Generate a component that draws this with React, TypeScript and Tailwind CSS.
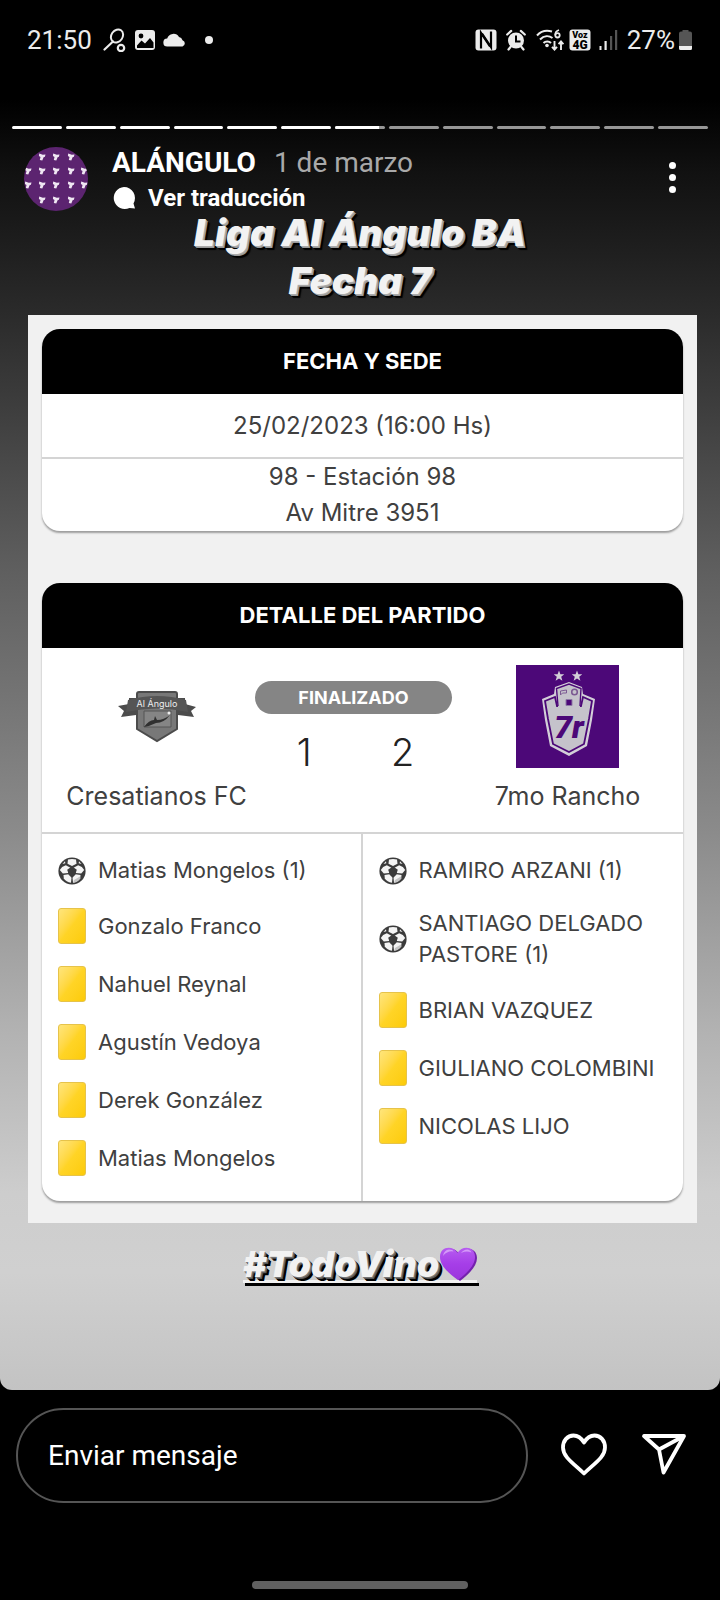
import React from "react";

type PlayerEvent = { kind: "goal" | "card"; name: string };

const homeEvents: PlayerEvent[] = [
  { kind: "goal", name: "Matias Mongelos (1)" },
  { kind: "card", name: "Gonzalo Franco" },
  { kind: "card", name: "Nahuel Reynal" },
  { kind: "card", name: "Agustín Vedoya" },
  { kind: "card", name: "Derek González" },
  { kind: "card", name: "Matias Mongelos" },
];

const awayEvents: PlayerEvent[] = [
  { kind: "goal", name: "RAMIRO ARZANI (1)" },
  { kind: "goal", name: "SANTIAGO DELGADO PASTORE (1)" },
  { kind: "card", name: "BRIAN VAZQUEZ" },
  { kind: "card", name: "GIULIANO COLOMBINI" },
  { kind: "card", name: "NICOLAS LIJO" },
];

const segments = [100, 100, 100, 100, 100, 100, 88, 0, 0, 0, 0, 0, 0];

function StatusBar() {
  return (
    <div className="flex h-20 items-center justify-between px-[27px] text-[26px] text-[#ececec]">
      <div className="flex items-center">
        <span>21:50</span>
        <svg className="ml-[11px] h-6 w-6" viewBox="0 0 24 24" fill="none" stroke="currentColor">
          <ellipse cx="14" cy="8" rx="5.6" ry="7" transform="rotate(35 14 8)" strokeWidth="2" />
          <path d="M10 13.5L1.5 21.5" strokeWidth="2.2" strokeLinecap="round" />
          <circle cx="18" cy="20" r="3.2" strokeWidth="2.2" />
        </svg>
        <svg className="ml-[7px] h-[22px] w-[22px]" viewBox="0 0 22 22">
          <rect x="1" y="1" width="20" height="20" rx="3" fill="currentColor" />
          <circle cx="7" cy="7" r="2.4" fill="#000" />
          <path d="M3 16.5l4.500-5 3.500 3 5-5.500 3.500 4.500V19H3z" fill="#000" />
        </svg>
        <svg className="ml-[7px] h-4 w-6" viewBox="0 0 24 16">
          <path d="M4.500 14.500a4 4 0 0 1-.3-8A6.500 6.500 0 0 1 16 5a4.500 4.500 0 0 1 3.500 3.200 3.300 3.300 0 0 1 0 6.300z" fill="currentColor" />
        </svg>
        <span className="ml-[18px] h-2 w-2 rounded-full bg-[#ececec]" />
      </div>
      <div className="flex items-center">
        <svg className="h-[22px] w-[22px]" viewBox="0 0 22 22">
          <rect x="0.500" y="0.500" width="21" height="21" rx="3" fill="currentColor" />
          <path d="M6 19.500V4l9 13.500" fill="none" stroke="#000" strokeWidth="2.200" />
          <path d="M16 2.500V18L7 4.500" fill="none" stroke="#000" strokeWidth="2.200" />
        </svg>
        <svg className="ml-[9px] h-[22px] w-5" viewBox="0 0 20 22">
          <circle cx="10" cy="11.500" r="8" fill="currentColor" />
          <path d="M1.200 5.500l4-3.600M18.800 5.500l-4-3.600M4.500 18L2.500 20.500M15.500 18l2 2.500" stroke="currentColor" strokeWidth="2.200" strokeLinecap="round" />
          <path d="M10 6.500v6h4.500" fill="none" stroke="#000" strokeWidth="2" />
        </svg>
        <svg className="ml-2.5 h-6 w-7" viewBox="0 0 28 24" fill="none" stroke="currentColor">
          <path d="M1 7.500C5.500 2.500 11 2 16 3.500M4 11.500c4-4 9-4 12.500-1.500M7.500 15c2-2 5.500-2 7.500 0" strokeWidth="2" />
          <circle cx="11" cy="17.500" r="1.800" fill="currentColor" stroke="none" />
          <path d="M23 2c-3 1-3.800 3.500-3.600 5.200" strokeWidth="1.800" />
          <circle cx="21.500" cy="7.300" r="2.200" strokeWidth="1.800" />
          <path d="M18.500 13v8M16 18.800l2.500 2.700 2.500-2.700M25 22v-8M22.600 16.200L25 13.500l2.400 2.700" strokeWidth="1.900" />
        </svg>
        <svg className="ml-[5px] h-[22px] w-[22px]" viewBox="0 0 22 22">
          <rect x="0.500" y="0.500" width="21" height="21" rx="3" fill="currentColor" />
          <text x="11" y="8.500" textAnchor="middle" fontSize="9" className="font-['Roboto',sans-serif] font-black" fill="#000">Voz</text>
          <text x="11" y="19.800" textAnchor="middle" fontSize="12" className="font-['Roboto',sans-serif] font-black" fill="#000">4G</text>
        </svg>
        <svg className="ml-[7px] h-[22px] w-5" viewBox="0 0 20 22">
          <path d="M1.500 17h2v4h-2zM6.500 12h2.200v9H6.500z" fill="currentColor" />
          <path d="M12 7h2.200v14H12zM17 1h2.200v20H17z" fill="#555" />
        </svg>
        <span className="ml-[9px]">27%</span>
        <svg className="ml-[3px] h-[22px] w-[15px]" viewBox="0 0 15 22">
          <path d="M4.500 2.500V1h6v1.500H12a2 2 0 0 1 2 2V17H1V4.500a2 2 0 0 1 2-2z" fill="#555" />
          <path d="M1 17h13v2.500a1.500 1.500 0 0 1-1.500 1.500h-10A1.500 1.500 0 0 1 1 19.500z" fill="currentColor" />
        </svg>
      </div>
    </div>
  );
}

const avatarMarks = [
  [18, 10], [32, 10], [47, 10],
  [4, 24], [18, 24], [32, 24], [47, 24], [60, 24],
  [4, 38], [18, 38], [32, 38], [47, 38], [60, 38],
  [18, 53], [32, 53], [47, 53],
];

function Avatar() {
  return (
    <svg className="h-16 w-16 shrink-0 rounded-full bg-[#5c2470]" viewBox="0 0 64 64">
      {avatarMarks.map(([x, y]) => (
        <path
          key={`${x}-${y}`}
          transform={`translate(${x} ${y})`}
          d="M-2.800-3.400l3.600 1.200 2.700-.4-.6 2.300-1.300.5-1.300 3.300-2.500-.4.700-3.200-1.600-1z"
          fill="#efe6f2"
        />
      ))}
    </svg>
  );
}

function StoryHeader() {
  return (
    <div className="mt-[18px] flex items-start pr-4 pl-6">
      <Avatar />
      <div className="ml-6 flex flex-1 flex-col">
        <div className="flex items-center text-[28px] leading-[32px]">
          <span className="font-bold text-white">ALÁNGULO</span>
          <span className="ml-[18px] text-[#a9a9a9]">1 de marzo</span>
        </div>
        <button className="mt-1.5 flex items-center text-[24px] leading-[26px] font-bold text-white">
          <svg className="mr-3 h-6 w-6" viewBox="0 0 24 24" fill="currentColor">
            <path d="M12 1a11 11 0 0 1 9.500 16.500L23 22.500l-5.500-.6A11 11 0 1 1 12 1z" />
          </svg>
          Ver traducción
        </button>
      </div>
      <button aria-label="Más opciones" className="mt-[15px] flex w-16 flex-col items-center gap-[5px]">
        <span className="h-[7px] w-[7px] rounded-full bg-white" />
        <span className="h-[7px] w-[7px] rounded-full bg-white" />
        <span className="h-[7px] w-[7px] rounded-full bg-white" />
      </button>
    </div>
  );
}

function AnguloCrest() {
  return (
    <svg className="h-[52px] w-[78px]" viewBox="0 0 78 52">
      <path d="M0 15l11-2V7h56v6l11 3-5 4 3 6-16-2H18L3 26l3-6z" fill="#4c4c4c" />
      <path d="M19 3q0-2 2-2h36q2 0 2 2v35L39 50 19 38z" fill="#787878" stroke="#4c4c4c" strokeWidth="2" />
      <path d="M10 9q29-8 58 0l2 12q-31-7-62 0z" fill="#555" />
      <path d="M26 20h27v16H26z" fill="#858585" stroke="#555" />
      <path d="M26 36q5-7 10-7l1-4 2 4q7 0 13-5-6 8-14 8-6 3-12 4z" fill="#303030" />
      <circle cx="51" cy="22" r="1.500" fill="#eee" />
      <text x="39" y="16" textAnchor="middle" fontSize="9" className="font-['Inter',sans-serif]" fill="#eee">Al Ángulo</text>
    </svg>
  );
}

const starPath = "M0-5.500l1.400 3.700h3.900L2.200.700l1.200 4L0 2.400l-3.400 2.300 1.200-4-3.100-2.500h3.900z";

function RanchoLogo() {
  return (
    <svg className="h-[103px] w-[103px] bg-[#4c0878]" viewBox="0 0 103 103">
      <g fill="#d3cfd8">
        <path d={starPath} transform="translate(43 11)" />
        <path d={starPath} transform="translate(61 11)" />
        <path d="M26 34l12-5 1-7 14-5 13 5 1 7 12 5-3 21-5 26-18 10-19-10-5-26z" />
      </g>
      <path d="M29 36l10-4 2 9h24l2-9 9 4-3 18-5 25-15 8-16-8-5-25z" fill="#c5c3cb" stroke="#4c0878" strokeWidth="1.800" />
      <path d="M42 42l-1.500-18.500L53 19l12 4.500L64 42v6H42z" fill="#c5c3cb" />
      <path d="M42 41l-1.500-17.500L53 19l12 4.500L64 41" fill="none" stroke="#4c0878" strokeWidth="1.400" />
      <path d="M44.500 30v-4l6-1v3h-4z" fill="none" stroke="#7c5a93" strokeWidth="1" />
      <path d="M50 34.500h6v6h-6z" fill="#4c0878" stroke="#8d78a5" strokeWidth="1" />
      <circle cx="58.500" cy="27" r="2.800" fill="none" stroke="#7c5a93" strokeWidth="1.600" />
      <text x="53" y="73" textAnchor="middle" fontSize="32" className="font-['Roboto',sans-serif] font-black italic" fill="#4c0878">7r</text>
    </svg>
  );
}

function Ball() {
  return (
    <svg className="h-7 w-7 shrink-0" viewBox="0 0 28 28">
      <circle cx="14" cy="14" r="13.600" fill="#3b3b3b" />
      <g fill="#f4f4f4">
        <path d="M10 2.600q4-1.400 8 0l.5 4.200L14 9 9.500 6.800z" />
        <path d="M7.800 8.200l4.700 2.600-2.300 5.200-5.400.4L1.800 13Q3.500 9.500 7.800 8.200z" />
        <path d="M20.200 8.200l-4.700 2.600 2.300 5.200 5.400.4 3-3.400Q24.500 9.500 20.200 8.200z" />
        <path d="M5.500 18l5-.8 3 3.600-.5 4.900q-5-.7-7.200-4.200z" />
        <path d="M22.500 18l-5-.8-3 3.600.5 4.900q5-.7 7.200-4.200z" />
        <path d="M4.500 7L7 4.300 7.300 6.200zM23.500 7L21 4.300 20.700 6.200z" />
      </g>
      <path d="M14 9.300l4.800 3.500-1.800 5.400h-6l-1.800-5.400z" fill="#3b3b3b" />
      <path d="M16 23l6-3.500.2 2q-2.200 3.500-7 4.200z" fill="#c4c4c4" />
    </svg>
  );
}

function YellowCard() {
  return (
    <span className="h-9 w-7 shrink-0 rounded-[3px] border border-[#e6c34a] bg-linear-to-br from-[#ffe57a] via-[#ffd426] to-[#fccb05]" />
  );
}

function EventList({ events }: { events: PlayerEvent[] }) {
  return (
    <ul className="pt-2.5 pr-4 pb-3.5 pl-4">
      {events.map((event) => (
        <li key={event.name} className="flex items-center gap-3 py-[11px]">
          {event.kind === "goal" ? <Ball /> : <YellowCard />}
          <span className="leading-[31px]">{event.name}</span>
        </li>
      ))}
    </ul>
  );
}

function Card({ title, children }: { title: string; children: React.ReactNode }) {
  return (
    <section className="overflow-hidden rounded-[18px] bg-white shadow-[0_2px_2px_rgba(0,0,0,0.35)]">
      <h2 className="bg-black text-center text-[22px] leading-[65px] font-bold text-white">{title}</h2>
      {children}
    </section>
  );
}

function MatchPanel() {
  return (
    <div className="mt-2.5 mr-[23px] ml-[28px] flex flex-col gap-[52px] bg-[#f1f1f1] px-3.5 pt-3.5 pb-[22px] font-['Inter',sans-serif] text-[#404040]">
      <Card title="FECHA Y SEDE">
        <p className="border-b-2 border-[#d4d4d4] text-center text-[24px] leading-[63px]">25/02/2023 (16:00 Hs)</p>
        <p className="text-center text-[24px] leading-[36px]">
          98 - Estación 98
          <br />
          Av Mitre 3951
        </p>
      </Card>
      <Card title="DETALLE DEL PARTIDO">
        <div className="grid grid-cols-[213fr_197fr_231fr] border-b-2 border-[#d4d4d4] pt-[17px] pb-5 text-[25px]">
          <div className="flex flex-col items-center gap-3 pl-4">
            <div className="flex h-[103px] items-center">
              <AnguloCrest />
            </div>
            <span className="leading-[32px]">Cresatianos FC</span>
          </div>
          <div className="flex flex-col pt-4">
            <span className="rounded-full bg-[#858585] text-center text-[18px] leading-[33px] font-bold text-white">FINALIZADO</span>
            <div className="mt-3 grid grid-cols-2 text-center text-[38px] leading-[52px] font-light text-[#222]">
              <span>1</span>
              <span>2</span>
            </div>
          </div>
          <div className="flex flex-col items-center gap-3">
            <RanchoLogo />
            <span className="leading-[32px]">7mo Rancho</span>
          </div>
        </div>
        <div className="grid grid-cols-2 divide-x-2 divide-[#d4d4d4] text-[22px]">
          <EventList events={homeEvents} />
          <EventList events={awayEvents} />
        </div>
      </Card>
    </div>
  );
}

function PurpleHeart() {
  return (
    <svg className="h-9 w-[38px]" viewBox="0 0 38 36">
      <defs>
        <linearGradient id="heart" x1="0" y1="0" x2="0" y2="1">
          <stop offset="0" stopColor="#b65cf0" />
          <stop offset="0.500" stopColor="#a63ee8" />
          <stop offset="1" stopColor="#9a35dc" />
        </linearGradient>
      </defs>
      <path d="M21 35C10 26 3 20 3 11.500 3 1 16 0 20 8 24 0 38 1 38 12c0 8-7 15-17 23z" fill="#7422ad" />
      <path d="M19 34C8 26 1 19 1 11 1 0 14-1 18.500 7 23-1 36 0 36 11c0 8-7 15-17 23z" fill="url(#heart)" />
      <path d="M4 10q1-6 6-6.500 4 0 4.500 2-6-1-10.500 4.500zM22 7q3-4 7-3.500 3 1 3.500 3-5-2-10.500.5z" fill="#d49af8" />
    </svg>
  );
}

export default function App() {
  return (
    <main className="flex min-h-screen flex-col bg-black font-['Roboto',sans-serif]">
      <StatusBar />
      <article className="rounded-b-xl bg-[linear-gradient(180deg,#000_0%,#000_1.500%,#111_7%,#1a1a1a_11%,#2b2b2b_18%,#5f5f5f_37.500%,#8a8a8a_57%,#b3b3b3_73%,#cdcdcd_85%,#d0d0d0_91%,#c3c3c3_100%)] pt-[46px] pb-[107px]">
        <div className="flex gap-1 px-3">
          {segments.map((fill, i) => (
            <div key={i} className="h-[3px] flex-1 overflow-hidden rounded-full bg-[#979797]">
              <div className="h-full bg-white" style={{ width: `${fill}%` }} />
            </div>
          ))}
        </div>
        <StoryHeader />
        <h1 className="-mt-0.5 text-center font-['Inter',sans-serif] text-[37px] leading-[48px] font-black text-[#f2f2f2] italic [text-shadow:1px_1px_0_#aaa,2px_2px_0_#999,3px_3px_0_#000,4px_4px_1px_#000]">
          Liga Al Ángulo BA
          <br />
          Fecha 7
        </h1>
        <MatchPanel />
        <div className="mt-[23px] flex justify-center">
          <div>
            <p className="flex h-9 items-center font-['Inter',sans-serif] text-[36px] leading-[36px] font-black text-[#f2f2f2] italic [text-shadow:1px_1px_0_#777,2px_2px_0_#555,3px_3px_0_#000,4px_4px_0_#000]">
              #TodoVino
              <PurpleHeart />
            </p>
            <div className="-mt-0.5 h-[3px] bg-[#f2f2f2] shadow-[2px_3px_0_#000]" />
          </div>
        </div>
      </article>
      <form className="mt-[18px] flex items-center pr-8 pl-4" onSubmit={(e) => e.preventDefault()}>
        <input
          type="text"
          aria-label="Enviar mensaje"
          placeholder="Enviar mensaje"
          className="h-[95px] min-w-0 flex-1 rounded-full border-2 border-[#555] bg-transparent px-[30px] text-[28px] text-white outline-none placeholder:text-white placeholder:opacity-100"
        />
        <button type="button" aria-label="Me gusta" className="ml-8">
          <svg className="h-12 w-12" viewBox="0 0 48 48" fill="none" stroke="#fff" strokeWidth="3.800" strokeLinejoin="round">
            <path d="M24 10.500C21 5.500 17.500 3.500 13.500 3.500 7.500 3.500 3 8.500 3 15.500c0 9.500 10 15.500 21 26 11-10.500 21-16.500 21-26 0-7-4.500-12-10.500-12-4 0-7.500 2-10.500 7z" />
          </svg>
        </button>
        <button type="submit" aria-label="Compartir" className="ml-8">
          <svg className="h-12 w-12" viewBox="0 0 48 48" fill="none" stroke="#fff" strokeWidth="3.800" strokeLinejoin="round">
            <path d="M4 4h40L23.500 40.500 19 17.500zM19 17.500L44 4" />
          </svg>
        </button>
      </form>
      <div className="mx-auto mt-auto mb-[11px] h-2 w-[30%] rounded-full bg-[#606060]" />
    </main>
  );
}
